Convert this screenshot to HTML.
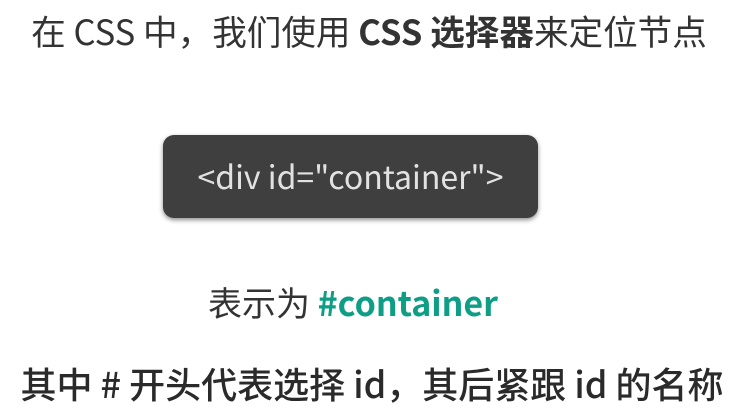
<!DOCTYPE html>
<html><head><meta charset="utf-8"><style>
html,body{margin:0;padding:0;background:#fff;}
body{width:744px;height:420px;position:relative;overflow:hidden;font-family:"Noto Sans CJK SC","Liberation Sans",sans-serif;color:#333;}
.l{position:absolute;left:0;width:744px;text-align:center;white-space:nowrap;}
#t1{top:7px;font-size:34.6px;line-height:46px;left:-3px;}
#box{position:absolute;left:163px;top:135px;width:375px;height:83px;background:#3f3f3f;border-radius:11px;box-shadow:0 2px 5px rgba(0,0,0,.45);color:#e2e2e2;font-size:32px;line-height:83px;text-align:center;}
#t3{top:280px;font-size:34px;line-height:44px;left:-19px;}
#t3 b{color:#0e9e86;}
#t4{top:360px;font-size:36px;line-height:46px;font-weight:500;color:#2a2a2a;}
b{font-weight:bold;}
</style></head><body>
<div class="l" id="t1">在 CSS 中，我们使用 <b>CSS 选择器</b>来定位节点</div>
<div id="box">&lt;div id="container"&gt;</div>
<div class="l" id="t3">表示为 <b>#container</b></div>
<div class="l" id="t4">其中 # 开头代表选择 id，其后紧跟 id 的名称</div>
</body></html>
